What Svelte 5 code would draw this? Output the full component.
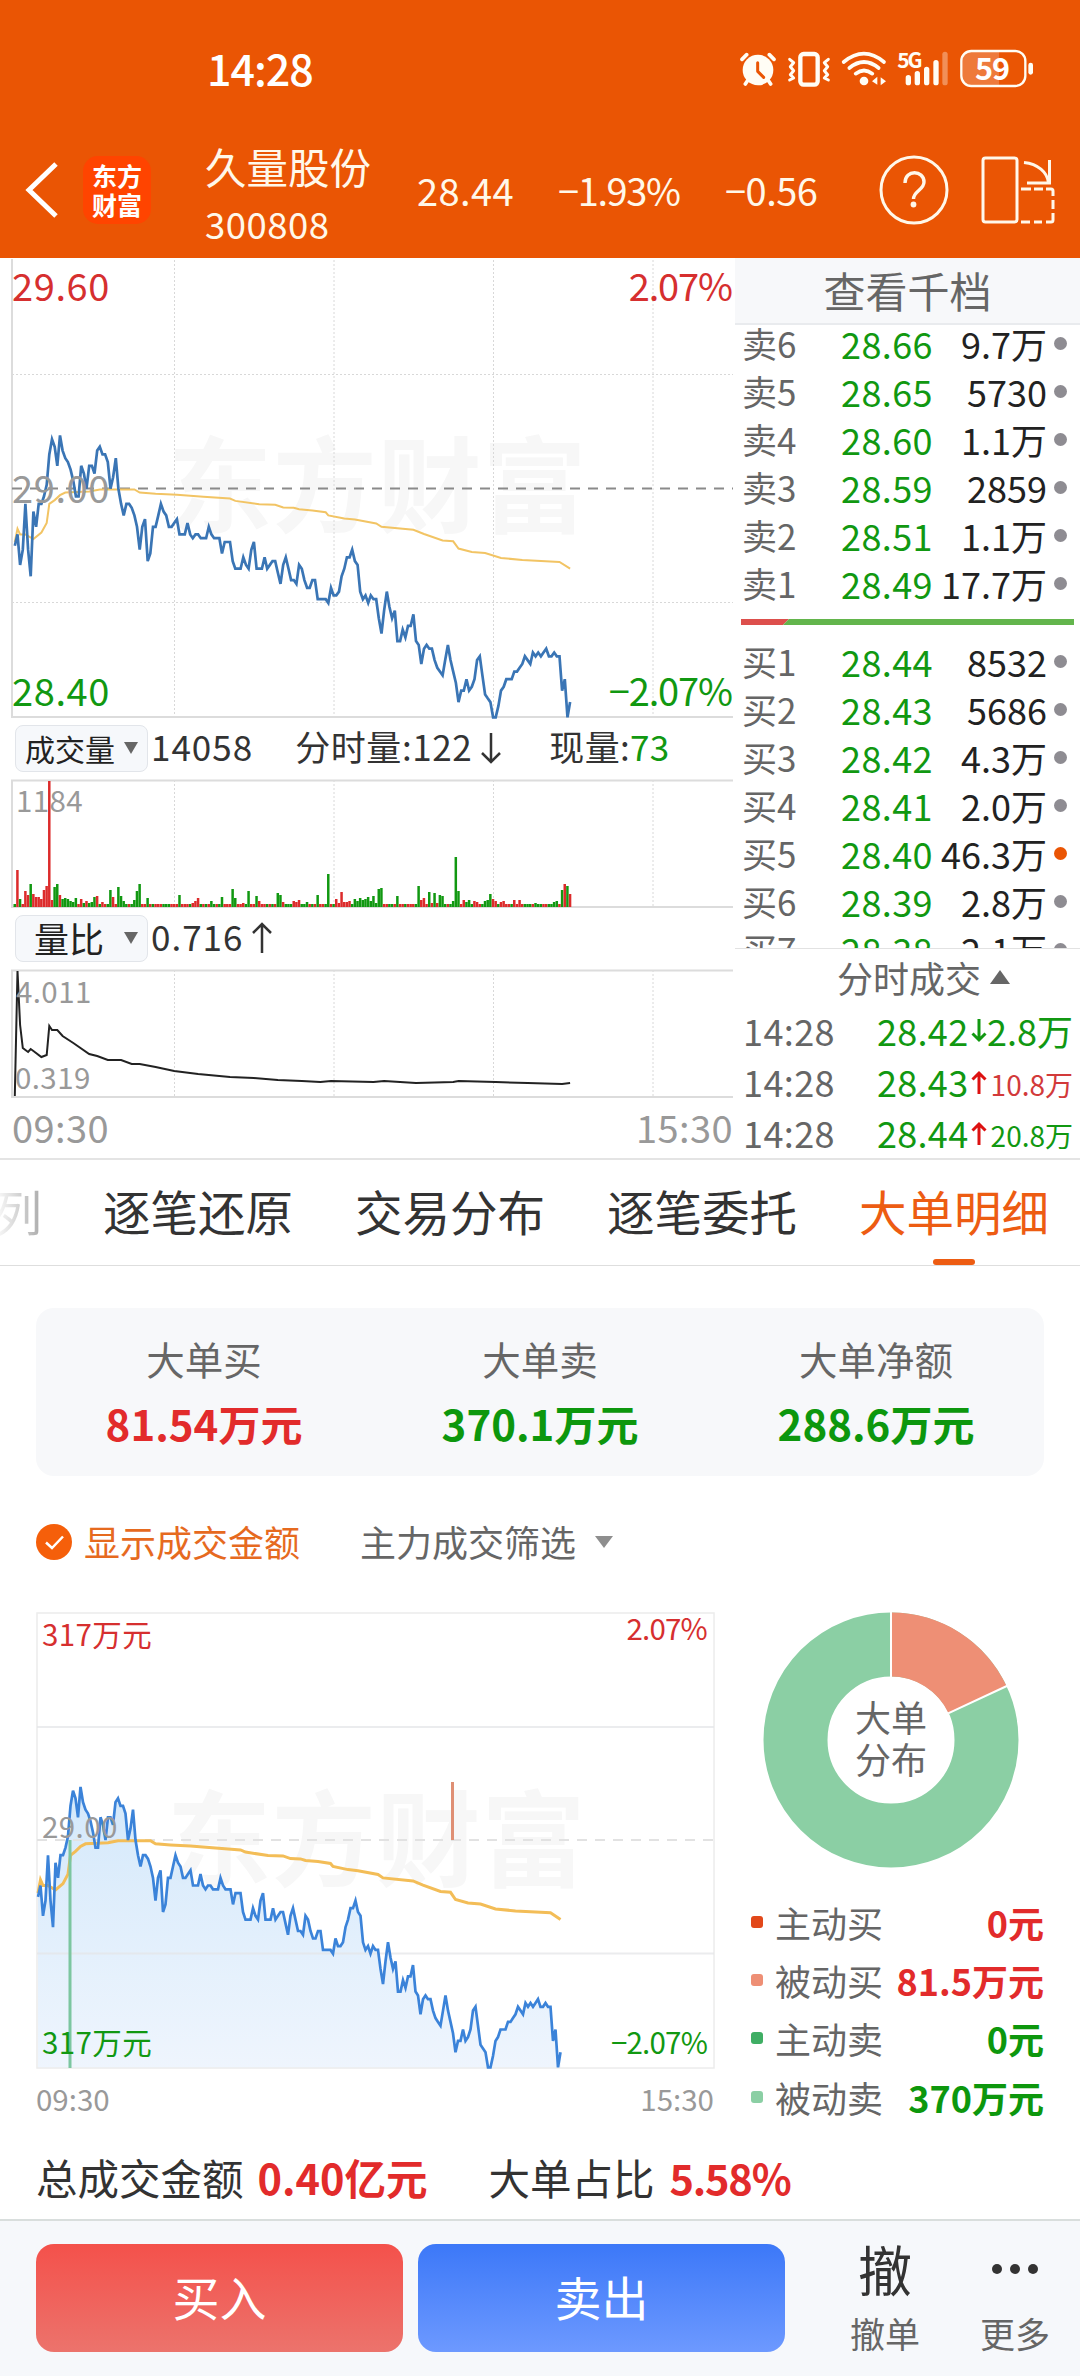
<script lang="ts">
  interface Level {
    label: string
    price: string
    volume: string
    hot?: boolean
  }

  // price per minute, in 0.01 steps from the previous close (29.00)
  const ticks: number[] = [
    -15, -12, -20, -16, -4, -16, -23, -6, -10, -4, -4, -2, 1, 9, 13, 11, 6, 14, 10, 8,
    7, 5, 2, -2, -2, 6, 4, 0, 6, 6, 4, 10, 11, 9, 9, 7, 0, 3, 8, 0,
    -4, -7, -4, -4, -5, -7, -10, -16, -10, -8, -19, -17, -10, -10, -7, -4, -6, -7, -10, -10,
    -9, -8, -12, -12, -12, -9, -12, -13, -12, -12, -13, -13, -13, -10, -12, -13, -13, -13, -17, -14,
    -14, -14, -19, -21, -21, -21, -18, -20, -21, -16, -14, -21, -21, -21, -18, -21, -20, -19, -19, -22,
    -25, -20, -18, -21, -24, -24, -25, -20, -21, -24, -26, -26, -24, -24, -29, -29, -29, -29, -30, -26,
    -28, -28, -27, -23, -21, -18, -18, -16, -19, -20, -27, -29, -28, -30, -28, -29, -29, -34, -38, -32,
    -27, -31, -34, -32, -40, -40, -37, -39, -36, -36, -33, -40, -41, -46, -42, -41, -42, -42, -45, -47,
    -48, -49, -45, -41, -45, -48, -51, -56, -53, -53, -50, -53, -52, -50, -45, -44, -49, -54, -55, -56,
    -60, -60, -57, -53, -52, -50, -50, -50, -48, -48, -47, -46, -44, -45, -46, -43, -44, -43, -44, -43,
    -42, -44, -44, -43, -44, -44, -53, -50, -60, -56
  ]

  // [minute, tick]
  const average: [number, number][] = [
    [0, -14], [1, -10.5], [2, -12], [4, -12], [7, -13.2], [10, -11.5], [12, -9], [13, -4], [15, -3],
    [17, -1.7], [19, -1], [28, -0.7], [32, -0.2], [45, -0.2], [47, -1], [53, -1.3], [61, -1.6],
    [71, -2.1], [81, -2.6], [83, -3.2], [92, -4.1], [98, -4.2], [101, -4.9], [105, -5], [107, -5.4],
    [112, -5.7], [117, -6.2], [118, -7], [124, -7.8], [128, -8.1], [136, -9.1], [138, -10],
    [150, -10.8], [154, -11.9], [161, -13.6], [165, -13.8], [167, -15.7], [172, -16.6],
    [177, -16.9], [183, -18.2], [191, -18.7], [205, -19.2], [209, -21]
  ]

  // minute -> bar height, negative for sells; every other minute is a stub
  const spikes: Record<number, number> = {
    0: -3, 1: 37, 2: -8, 4: 16, 5: 12, 6: -23, 7: 13, 8: 10, 9: 10, 10: 8, 11: 17, 12: 21, 13: 126,
    14: 7, 15: -20, 16: -23, 17: 12, 18: -8, 19: -9, 20: -8, 21: -6, 22: -5, 23: -9, 25: 8, 26: -4,
    27: 6, 28: -4, 29: -5, 30: -10, 31: 11, 33: 5, 36: -17, 37: 10, 39: -20, 40: -11, 41: -6,
    45: -7, 46: -16, 47: -23, 50: -9, 62: -12, 67: 4, 68: 6, 69: 9, 74: -6, 78: -10, 82: -18,
    83: -9, 86: 4, 88: -16, 91: -11, 92: 6, 99: -14, 100: -12, 101: 5, 105: 6, 106: 5, 107: 7,
    110: -5, 114: -12, 118: -33, 121: 8, 122: 4, 123: 15, 124: 5, 125: 5, 126: 6, 128: -8, 129: -6,
    130: -9, 131: -7, 132: -8, 133: -10, 134: -6, 135: -11, 136: -4, 137: -18, 138: -19, 144: -11,
    152: -21, 153: 7, 154: 9, 156: -15, 157: 4, 158: -14, 159: 4, 160: -12, 161: -11, 165: -6,
    166: -50, 167: -16, 169: 7, 170: -5, 171: -7, 173: 6, 174: 5, 177: -6, 178: -7, 179: -13,
    180: 8, 181: 6, 183: 5, 184: 6, 188: 7, 190: 7, 196: -4, 203: -5, 204: -6, 206: -17, 207: 23,
    208: -21, 209: 13
  }

  // [minute, px below the top edge]
  const ratio: [number, number][] = [
    [0, 126], [1, 1], [2, 55], [3, 78], [4, 80], [5, 82], [6, 79], [7, 81], [10, 87], [12, 85],
    [13, 56], [14, 60], [16, 60], [18, 66], [22, 73], [28, 84], [31, 86], [35, 90], [40, 90],
    [44, 94], [47, 94], [53, 97], [60, 101], [69, 104], [81, 107], [90, 108], [99, 110],
    [108, 111], [115, 112], [119, 111], [135, 112], [139, 111], [151, 113], [165, 112],
    [167, 111], [181, 112], [193, 113], [206, 114], [209, 113]
  ]

  function line(points: [number, number][], x0: number, dx: number, y0: number, dy: number): string {
    return points.map(([m, v]) => `${(x0 + m * dx).toFixed(1)},${(y0 + v * dy).toFixed(1)}`).join(' ')
  }

  const prices = ticks.map((t, i) => [i, t] as [number, number])
  const mainPrice = line(prices, 14.8, 2.657, 230.7, -3.81)
  const mainAverage = line(average, 14.8, 2.657, 230.7, -3.81)
  const ratioLine = line(ratio, 14.8, 2.657, 4, 1)
  const bigPrice = line(prices, 2, 2.5, 228, -3.79)
  const bigAverage = line(average, 2, 2.5, 228, -3.79)

  const bars = ticks.map((t, i) => {
    const v = spikes[i] ?? (i > 0 && t < ticks[i - 1] ? -3 : i % 5 === 2 ? -3 : 3)
    return { x: 13.5 + i * 2.657, h: Math.abs(v), up: v > 0 }
  })

  const gridX = [174.5, 334, 493.5, 653]

  const sells: Level[] = [
    { label: '卖6', price: '28.66', volume: '9.7万' },
    { label: '卖5', price: '28.65', volume: '5730' },
    { label: '卖4', price: '28.60', volume: '1.1万' },
    { label: '卖3', price: '28.59', volume: '2859' },
    { label: '卖2', price: '28.51', volume: '1.1万' },
    { label: '卖1', price: '28.49', volume: '17.7万' }
  ]

  const buys: Level[] = [
    { label: '买1', price: '28.44', volume: '8532' },
    { label: '买2', price: '28.43', volume: '5686' },
    { label: '买3', price: '28.42', volume: '4.3万' },
    { label: '买4', price: '28.41', volume: '2.0万' },
    { label: '买5', price: '28.40', volume: '46.3万', hot: true },
    { label: '买6', price: '28.39', volume: '2.8万' },
    { label: '买7', price: '28.38', volume: '2.1万' }
  ]

  const trades = [
    { time: '14:28', price: '28.42', rise: false, volume: '2.8万', buy: false, small: false },
    { time: '14:28', price: '28.43', rise: true, volume: '10.8万', buy: true, small: true },
    { time: '14:28', price: '28.44', rise: true, volume: '20.8万', buy: false, small: true }
  ]

  const tabs = ['逐笔还原', '交易分布', '逐笔委托', '大单明细']
  let activeTab = $state('大单明细')

  const totals = [
    { label: '大单买', value: '81.54万元', up: true },
    { label: '大单卖', value: '370.1万元', up: false },
    { label: '大单净额', value: '288.6万元', up: false }
  ]

  const legend = [
    { label: '主动买', value: '0元', color: '#e2481a', up: true },
    { label: '被动买', value: '81.5万元', color: '#ee8f75', up: true },
    { label: '主动卖', value: '0元', color: '#3fae64', up: false },
    { label: '被动卖', value: '370万元', color: '#8bcfa4', up: false }
  ]

  // donut slice of the passive buys
  const angle = (81.54 / (81.54 + 370.1)) * 2 * Math.PI
  function polar(r: number, a: number): string {
    return `${(128 + r * Math.sin(a)).toFixed(2)} ${(128 - r * Math.cos(a)).toFixed(2)}`
  }
  const slice = `M${polar(127.5, 0)} A127.5 127.5 0 0 1 ${polar(127.5, angle)} L${polar(63.5, angle)} A63.5 63.5 0 0 0 ${polar(63.5, 0)} Z`
</script>

{#snippet level(row: Level)}
  <div class="level">
    <span class="level-label">{row.label}</span>
    <span class="level-price">{row.price}</span>
    <span class="level-volume">{row.volume}</span>
    <i class="dot" class:hot={row.hot}></i>
  </div>
{/snippet}

<div class="page">
  <header>
    <div class="status">
      <span class="clock">14:28</span>
      <svg class="status-icons" viewBox="0 0 1020 240" fill="none" stroke="#fffdf5" stroke-linecap="round" stroke-linejoin="round">
        <circle cx="114" cy="120" r="46" fill="#fffdf5" stroke="none" />
        <path d="M66 88l14-14M162 88l-14-14M84 150l-8 12M144 150l8 12" stroke-width="11" />
        <path d="M113 98v26l18 18" stroke="#ea5504" stroke-width="9" />
        <rect x="241" y="72" width="52" height="92" rx="10" stroke-width="13" />
        <path d="M209 88l12 10-10 12 10 12-10 12 10 10-12 6M325 88l-12 10 10 12-10 12 10 12-10 10 12 6" stroke-width="9" />
        <path d="M371 96Q432 46 492 96M388 114Q432 78 476 114M407 131Q432 112 457 131" stroke-width="11" />
        <circle cx="432" cy="153" r="13" fill="#fffdf5" stroke="none" />
        <path d="M472 140v24l-16-10zM482 142v24l16-12z" fill="#fffdf5" stroke="none" />
        <text x="532" y="113" class="net">5G</text>
        <path d="M565 143v15M592 131v27M620 118v40M648 98v60" stroke-width="16" />
        <path d="M675 73v85" stroke-width="16" stroke-opacity=".35" />
        <path d="M752 66h85v98h-85q-25 0-25-26V92q0-26 25-26z" fill="#fff" fill-opacity=".22" stroke="none" />
        <rect x="724" y="63" width="192" height="105" rx="30" stroke-width="7" />
        <path d="M932 105v22" stroke-width="14" />
        <text x="816" y="150" class="battery" text-anchor="middle">59</text>
      </svg>
    </div>
    <div class="titlebar">
      <svg class="back" viewBox="0 0 34 56"><path d="M31 2L4 28L31 54" fill="none" stroke="#fff" stroke-width="5" /></svg>
      <div class="logo"><span>东方</span><span>财富</span></div>
      <div class="stock">
        <span class="stock-name">久量股份</span>
        <span class="stock-code">300808</span>
      </div>
      <span class="quote last">28.44</span>
      <span class="quote percent">−1.93%</span>
      <span class="quote change">−0.56</span>
      <svg class="help" viewBox="0 0 70 70" fill="none" stroke="#fff8ea">
        <circle cx="35" cy="35" r="33" stroke-width="3" />
        <path d="M26 28C26 14 45 15 45 27C45 35 34.5 36 34.5 44" stroke-width="3.4" />
        <circle cx="34.5" cy="49.5" r="2.9" fill="#fff8ea" stroke="none" />
      </svg>
      <svg class="rotate" viewBox="0 0 74 68" fill="none" stroke="#fff8ea" stroke-width="3">
        <rect x="2" y="2" width="34" height="64" rx="2.5" />
        <path d="M43 6.5C57 8 66 16 67.5 26.5M68.5 4V27M46 27H70" />
        <path d="M40 33H50M53 33H62M65 33H70Q72 33 72 35V40M72 44V53M72 57V64Q72 66 70 66H65M61 66H53M49 66H40" />
      </svg>
    </div>
  </header>

  <section class="market">
    <div class="charts">
      <svg class="chart" viewBox="0 0 735 462" height="462">
        <text x="168" y="267" class="watermark">东方财富</text>
        {#each gridX as x}
          <line x1={x} y1="2" x2={x} y2="459" class="dotted" />
        {/each}
        <line x1="12" y1="116.5" x2="733" y2="116.5" class="dotted" />
        <line x1="12" y1="344.5" x2="733" y2="344.5" class="dotted" />
        <path d="M12 1V459H733" class="frame" />
        <line x1="12" y1="230.5" x2="733" y2="230.5" stroke="#8a8a8a" stroke-width="2" stroke-dasharray="10 8" />
        <polyline points={mainAverage} class="average" />
        <polyline points={mainPrice} class="price" />
        <text x="12" y="43" class="axis up">29.60</text>
        <text x="732" y="43" class="axis percent-label up" text-anchor="end">2.07%</text>
        <text x="12" y="245" class="axis faint">29.00</text>
        <text x="12" y="448" class="axis down">28.40</text>
        <text x="732" y="448" class="axis percent-label down" text-anchor="end">−2.07%</text>
      </svg>

      <div class="indicator">
        <button class="picker">成交量<i class="caret"></i></button>
        <span class="num">14058</span>
        <span class="minute-volume">分时量:122<svg class="arrow" viewBox="0 0 20 32"><path d="M10 1V30M1 21L10 30L19 21" /></svg></span>
        <span class="current-volume">现量:<b>73</b></span>
      </div>
      <svg class="chart" viewBox="0 0 735 134" height="134">
        {#each gridX as x}
          <line x1={x} y1="4" x2={x} y2="131" class="dotted" />
        {/each}
        <path d="M733 4.5H12V131H733" class="frame" />
        <text x="16" y="36" class="small faint">1184</text>
        {#each bars as bar}
          <rect x={bar.x} y={131 - bar.h} width="2.5" height={bar.h} fill={bar.up ? '#dc2b2b' : '#119811'} />
        {/each}
      </svg>

      <div class="indicator">
        <button class="picker wide">量比<i class="caret"></i></button>
        <span class="num">0.716<svg class="arrow" viewBox="0 0 20 32"><path d="M10 31V2M1 11L10 2L19 11" /></svg></span>
      </div>
      <svg class="chart" viewBox="0 0 735 136" height="136">
        {#each gridX as x}
          <line x1={x} y1="4" x2={x} y2="131" class="dotted" />
        {/each}
        <path d="M733 4.5H12V131H733" class="frame" />
        <polyline points={ratioLine} fill="none" stroke="#222" stroke-width="2" />
        <text x="16" y="37" class="small faint">4.011</text>
        <text x="15" y="123" class="small faint">0.319</text>
      </svg>
      <div class="times"><span>09:30</span><span>15:30</span></div>
    </div>

    <aside>
      <div class="depth-title">查看千档</div>
      <div class="levels">
        {#each sells as row}
          {@render level(row)}
        {/each}
        <svg class="balance" viewBox="0 0 333 6">
          <path d="M0 0H48L42 6H0Z" fill="#dd4f4c" />
          <path d="M48 0H333V6H42Z" fill="#63b54c" />
        </svg>
        {#each buys as row}
          {@render level(row)}
        {/each}
      </div>
      <div class="trades">
        <div class="trades-title">分时成交<i></i></div>
        {#each trades as trade}
          <div class="trade">
            <span class="trade-time">{trade.time}</span>
            <span class="trade-price">{trade.price}</span>
            <svg class="tick" class:rise={trade.rise} viewBox="0 0 16 24"><path d="M8 0V21M1.5 14.5L8 21L14.5 14.5" /></svg>
            <span class="trade-volume" class:up={trade.buy} class:small-volume={trade.small}>{trade.volume}</span>
          </div>
        {/each}
      </div>
    </aside>
  </section>

  <nav>
    <span class="cut-tab">列</span>
    {#each tabs as tab}
      <button class="tab" class:active={tab === activeTab} onclick={() => (activeTab = tab)}>{tab}</button>
    {/each}
  </nav>

  <main>
    <div class="totals">
      {#each totals as total}
        <div class="total">
          <span class="total-label">{total.label}</span>
          <strong class:up={total.up}>{total.value}</strong>
        </div>
      {/each}
    </div>

    <div class="filters">
      <svg class="check" viewBox="0 0 36 36"><circle cx="18" cy="18" r="18" fill="#f55f0a" /><path d="M10 18.5L16 24L27 12.5" fill="none" stroke="#fff" stroke-width="2.5" /></svg>
      <span class="show-amount">显示成交金额</span>
      <span class="main-filter">主力成交筛选</span>
      <i class="filter-caret"></i>
    </div>

    <div class="distribution">
      <div class="big-chart">
        <svg viewBox="0 0 680 458" width="680" height="458">
          <defs>
            <linearGradient id="area" x1="0" y1="0" x2="0" y2="1">
              <stop offset="0" stop-color="#cfe6fa" />
              <stop offset="1" stop-color="#edf4fd" />
            </linearGradient>
          </defs>
          <text x="131" y="267" class="watermark">东方财富</text>
          <polygon points="2,456 {bigPrice} 524.5,456" fill="url(#area)" fill-opacity=".9" />
          <rect x="1" y="1" width="677" height="455" fill="none" stroke="#ececec" stroke-width="1.5" />
          <path d="M1 115H678M1 341.5H678" stroke="#e4e6e8" stroke-opacity=".75" stroke-width="2" />
          <line x1="1" y1="228" x2="678" y2="228" stroke="#e2e2e2" stroke-width="2" stroke-dasharray="10 8" />
          <polyline points={bigAverage} class="average thick" />
          <rect x="32.5" y="228" width="3" height="228" fill="#7cc6a0" />
          <rect x="415" y="170" width="3" height="58" fill="#df8f74" />
          <polyline points={bigPrice} class="price bright" />
          <text x="6" y="34" class="small up">317万元</text>
          <text x="671" y="28" class="small small-percent up" text-anchor="end">2.07%</text>
          <text x="6" y="226" class="small faint">29.00</text>
          <text x="6" y="442" class="small down">317万元</text>
          <text x="671" y="442" class="small small-percent down" text-anchor="end">−2.07%</text>
        </svg>
        <div class="big-times"><span>09:30</span><span>15:30</span></div>
      </div>

      <div class="share">
        <div class="donut">
          <svg viewBox="0 0 256 256">
            <circle cx="128" cy="128" r="95.5" fill="none" stroke="#8bcfa4" stroke-width="64" />
            <path d={slice} fill="#ee8f75" />
            <path d="M128 0V65M{polar(63, angle)} L{polar(129, angle)}" stroke="#fff" stroke-width="2" />
          </svg>
          <span class="donut-label">大单<br />分布</span>
        </div>
        {#each legend as item}
          <div class="legend-row">
            <i style="background: {item.color}"></i>
            <span>{item.label}</span>
            <strong class:up={item.up}>{item.value}</strong>
          </div>
        {/each}
      </div>
    </div>

    <div class="summary">
      <span>总成交金额</span><strong class="up">0.40亿元</strong>
      <span class="ratio-label">大单占比</span><strong class="up big-ratio">5.58%</strong>
    </div>
  </main>

  <footer>
    <button class="order buy">买入</button>
    <button class="order sell">卖出</button>
    <div class="action"><span class="glyph">撤</span><span>撤单</span></div>
    <div class="action more"><span class="glyph"><i></i><i></i><i></i></span><span>更多</span></div>
  </footer>
</div>

<style>
  :global(body) {
    margin: 0;
    background: #fff;
  }

  .page {
    width: 1080px;
    height: 2376px;
    overflow: hidden;
    display: flex;
    flex-direction: column;
    font-family: 'Noto Sans CJK SC', 'Noto Sans', sans-serif;
    font-size: 36px;
    color: #333;
    white-space: nowrap;
  }

  svg {
    display: block;
    flex-shrink: 0;
  }

  button {
    border: 0;
    padding: 0;
    background: none;
    font: inherit;
    color: inherit;
  }

  .up {
    color: #de2b2b;
    fill: #d62f2f;
  }

  .down {
    fill: #119811;
  }

  .faint {
    fill: #999;
  }

  header {
    height: 258px;
    flex-shrink: 0;
    background: #ea5504;
    color: #fff8ea;
  }

  .status {
    height: 110px;
    display: flex;
    justify-content: space-between;
    padding: 0 20px 0 207px;
    box-sizing: border-box;
  }

  .clock {
    margin-top: 30px;
    font-size: 43px;
    line-height: 74px;
    font-weight: 500;
    letter-spacing: -1px;
    color: #fff;
  }

  .status-icons {
    width: 340px;
    height: 80px;
    margin-top: 30px;
  }

  .net {
    font-size: 63px;
    font-weight: 700;
    letter-spacing: -7px;
    fill: #fffdf5;
    stroke: none;
  }

  .battery {
    font-size: 92px;
    font-weight: 700;
    letter-spacing: -3px;
    fill: #fff;
    stroke: none;
  }

  .titlebar {
    height: 148px;
    padding-top: 12px;
    box-sizing: border-box;
    display: flex;
    align-items: center;
    line-height: 58px;
  }

  .back {
    width: 34px;
    height: 56px;
    margin-left: 25px;
  }

  .logo {
    width: 68px;
    height: 68px;
    margin-left: 24px;
    border-radius: 15px;
    background: #ff4400;
    display: flex;
    flex-direction: column;
    align-items: center;
    justify-content: center;
    font-size: 25px;
    font-weight: 700;
    line-height: 29px;
    color: #fff;
  }

  .stock {
    width: 212px;
    margin: 10px 0 0 54px;
    display: flex;
    flex-direction: column;
  }

  .stock-name {
    font-size: 41.5px;
  }

  .stock-code {
    font-size: 36.5px;
    letter-spacing: 0.5px;
  }

  .quote {
    font-size: 38px;
  }

  .last {
    width: 141px;
    letter-spacing: 0.4px;
  }

  .percent {
    width: 167px;
    letter-spacing: -1.4px;
  }

  .change {
    width: 154px;
    letter-spacing: -0.5px;
  }

  .help {
    width: 70px;
    height: 70px;
  }

  .rotate {
    width: 74px;
    height: 68px;
    margin-left: 32px;
  }

  .market {
    height: 900px;
    flex-shrink: 0;
    display: grid;
    grid-template-columns: 735px 345px;
    border-bottom: 2px solid #e4e4e4;
    box-sizing: content-box;
  }

  .chart {
    width: 735px;
  }

  .dotted {
    stroke: #d8d8d8;
    stroke-width: 1;
    stroke-dasharray: 2 2;
  }

  .frame {
    fill: none;
    stroke: #dcdcdc;
    stroke-width: 2;
  }

  .watermark {
    font-size: 104px;
    font-weight: 700;
    letter-spacing: 0.8px;
    fill: #f7f7f7;
  }

  .average {
    fill: none;
    stroke: #f2c464;
    stroke-width: 2;
  }

  .average.thick {
    stroke: #f3bd57;
    stroke-width: 3;
  }

  .price {
    fill: none;
    stroke: #3a75b5;
    stroke-width: 2.7;
  }

  .price.bright {
    stroke: #3b83d9;
  }

  .axis {
    font-size: 38px;
    letter-spacing: 0.6px;
  }

  .axis.percent-label {
    letter-spacing: -1.1px;
  }

  .small {
    font-size: 29.5px;
    letter-spacing: 0.4px;
  }

  .small.small-percent {
    letter-spacing: -0.8px;
  }

  .indicator {
    height: 56px;
    display: flex;
    align-items: center;
    padding-left: 15px;
    font-size: 35px;
    line-height: 52px;
  }

  .indicator > span {
    display: flex;
    align-items: center;
    margin-top: -4px;
  }

  .picker {
    width: 133px;
    height: 47px;
    box-sizing: border-box;
    border: 1.5px solid #e2e5ea;
    border-radius: 8px;
    background: #f6f8fb;
    display: flex;
    align-items: center;
    justify-content: space-between;
    padding: 0 9px;
    font-size: 30px;
    line-height: 42px;
    color: #222;
  }

  .picker.wide {
    padding-left: 18px;
    font-size: 35px;
  }

  .caret {
    border: 7px solid transparent;
    border-top: 12px solid #666;
    border-bottom: 0;
  }

  .num {
    margin-left: 3px;
    letter-spacing: 1px;
  }

  .arrow {
    width: 20px;
    height: 32px;
    margin: 4px 0 0 9px;
  }

  .arrow path {
    fill: none;
    stroke: #333;
    stroke-width: 2.5;
  }

  .minute-volume {
    margin-left: 42px;
    letter-spacing: 0.6px;
  }

  .current-volume {
    margin-left: 48px;
    letter-spacing: 0.3px;
  }

  .current-volume b {
    font-weight: 400;
    color: #119811;
  }

  .times {
    display: flex;
    justify-content: space-between;
    padding: 0 2px 0 12px;
    font-size: 38px;
    line-height: 50px;
    letter-spacing: 0.4px;
    color: #999;
  }

  aside {
    height: 900px;
    overflow: hidden;
  }

  .depth-title {
    height: 65px;
    border-bottom: 2px solid #e9ebee;
    background: #f7f8fa;
    text-align: center;
    font-size: 42px;
    line-height: 63px;
    color: #666;
  }

  .levels {
    height: 624px;
    overflow: hidden;
    border-bottom: 1px solid #e2e2e2;
    box-sizing: border-box;
  }

  .level:first-child {
    margin-top: -6px;
  }

  .level {
    height: 48px;
    display: grid;
    grid-template-columns: 99px 100px 106px 20px;
    align-items: center;
    padding-left: 7px;
    line-height: 48px;
  }

  .level-label {
    font-size: 35px;
    color: #666;
  }

  .level-price {
    letter-spacing: 0.4px;
    color: #119811;
  }

  .level-volume {
    justify-self: end;
    color: #222;
  }

  .dot {
    width: 13px;
    height: 13px;
    margin-left: 7px;
    border-radius: 50%;
    background: #8e8c92;
  }

  .dot.hot {
    background: #ea5504;
  }

  .balance {
    width: 333px;
    height: 6px;
    margin: 12px 0 12px 6px;
  }

  .trades-title {
    height: 56px;
    display: flex;
    align-items: center;
    gap: 9px;
    padding-left: 102px;
    line-height: 54px;
    color: #666;
  }

  .trades-title i {
    border: 10.5px solid transparent;
    border-bottom: 14px solid #666;
    border-top: 0;
  }

  .trade {
    height: 51px;
    display: flex;
    align-items: center;
    padding: 0 7px 0 8px;
    line-height: 51px;
  }

  .trade-time {
    width: 134px;
    letter-spacing: 0.4px;
    color: #666;
  }

  .trade-price {
    width: 94px;
    letter-spacing: 0.3px;
    color: #119811;
  }

  .tick {
    width: 16px;
    height: 24px;
  }

  .tick path {
    fill: none;
    stroke: #119811;
    stroke-width: 3;
  }

  .tick.rise {
    transform: rotate(180deg);
  }

  .tick.rise path {
    stroke: #dd1111;
  }

  .trade-volume {
    margin-left: auto;
    color: #119811;
  }

  .trade-volume.up {
    color: #d23a3a;
  }

  .small-volume {
    font-size: 28px;
    padding-top: 6px;
    line-height: 45px;
  }

  nav {
    height: 105px;
    flex-shrink: 0;
    display: flex;
    gap: 60px;
    border-bottom: 1px solid #dedede;
    font-size: 48px;
    line-height: 101px;
  }

  .cut-tab {
    width: 48px;
    margin-left: -6px;
    background: linear-gradient(90deg, #fff, #aaa);
    background-clip: text;
    color: transparent;
  }

  .tab {
    width: 192px;
    display: flex;
    flex-direction: column;
    align-items: center;
    font-size: 47.5px;
  }

  .tab.active {
    color: #ed5c12;
  }

  .tab.active::after {
    content: '';
    width: 42px;
    height: 6px;
    margin-top: -2px;
    border-radius: 3px;
    background: #ed5c12;
  }

  main {
    padding: 42px 36px 0;
    height: 911px;
    flex-shrink: 0;
  }

  .totals {
    height: 168px;
    box-sizing: border-box;
    padding-top: 21px;
    display: grid;
    grid-template-columns: repeat(3, 1fr);
    border-radius: 18px;
    background: #f7f8fa;
  }

  .total {
    display: flex;
    flex-direction: column;
    align-items: center;
  }

  .total-label {
    font-size: 38.5px;
    line-height: 58px;
    color: #666;
  }

  strong {
    font-weight: 700;
    color: #0d970d;
  }

  strong.up {
    color: #e22b2b;
  }

  .total strong {
    font-size: 42px;
    line-height: 72px;
  }

  .filters {
    height: 54px;
    margin-top: 39px;
    display: flex;
    align-items: center;
    line-height: 50px;
    padding-bottom: 1px;
  }

  .check {
    width: 36px;
    height: 36px;
  }

  .show-amount {
    margin: -2px 0 0 12px;
    color: #e66a1f;
  }

  .main-filter {
    margin: -2px 19px 0 60px;
    color: #666;
  }

  .filter-caret {
    border: 9px solid transparent;
    border-top: 12px solid #8e8e8e;
    border-bottom: 0;
  }

  .distribution {
    margin-top: 42px;
    height: 535px;
    display: flex;
  }

  .big-chart {
    width: 680px;
  }

  .big-times {
    display: flex;
    justify-content: space-between;
    padding: 8px 2px 0 0;
    font-size: 29.5px;
    line-height: 40px;
    color: #999;
  }

  .share {
    width: 293px;
    margin-left: 35px;
  }

  .donut {
    width: 256px;
    height: 256px;
    margin: 0 0 25px 12px;
    display: grid;
    place-items: center;
  }

  .donut > * {
    grid-area: 1 / 1;
  }

  .donut svg {
    width: 256px;
    height: 256px;
  }

  .donut-label {
    line-height: 42px;
    color: #666;
    margin-top: -6px;
  }

  .legend-row {
    height: 58.2px;
    display: flex;
    align-items: center;
    line-height: 58px;
    color: #666;
  }

  .legend-row i {
    width: 12px;
    height: 12px;
    margin-right: 12px;
    border-radius: 3px;
  }

  .legend-row strong {
    margin-left: auto;
  }

  .summary {
    height: 60px;
    display: flex;
    align-items: center;
    font-size: 41.5px;
    line-height: 60px;
  }

  .summary strong {
    margin-left: 14px;
  }

  .summary .big-ratio {
    letter-spacing: -1.2px;
    margin-left: 15px;
  }

  .ratio-label {
    margin-left: 61px;
  }

  footer {
    height: 157px;
    box-sizing: border-box;
    flex-shrink: 0;
    display: flex;
    padding: 23px 0 0 36px;
    border-top: 2px solid #d9dedd;
    background: #f6f8fb;
  }

  .order {
    width: 367px;
    height: 108px;
    margin-right: 15px;
    padding-bottom: 5px;
    border-radius: 18px;
    font-size: 47px;
    line-height: 100px;
    color: #fff;
  }

  .buy {
    background: linear-gradient(#f4514b, #ec736c);
  }

  .sell {
    background: linear-gradient(#3c78f8, #6d99ff);
  }

  .action {
    width: 70px;
    margin-left: 50px;
    display: flex;
    flex-direction: column;
    align-items: center;
    font-size: 35px;
    line-height: 50px;
    color: #666;
  }

  .action.more {
    margin-left: 60px;
  }

  .glyph {
    height: 66px;
    display: flex;
    gap: 8px;
    align-items: center;
    margin-top: -8px;
    padding-bottom: 6px;
    font-size: 54px;
    color: #333;
  }

  .glyph i {
    width: 10px;
    height: 10px;
    border-radius: 50%;
    background: #333;
  }
</style>
